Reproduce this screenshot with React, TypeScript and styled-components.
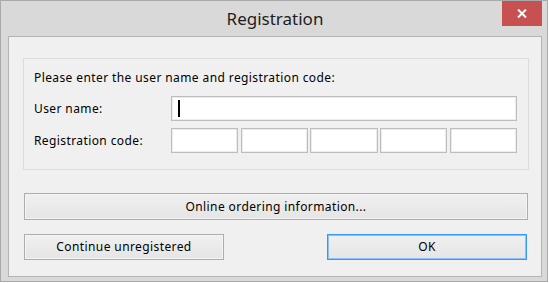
import React from 'react'
import styled, { createGlobalStyle } from 'styled-components'

const GlobalStyle = createGlobalStyle`
  html, body {
    margin: 0;
    padding: 0;
    background: #ffffff;
  }
  body {
    font-family: "Segoe UI", "Noto Sans", "Open Sans", sans-serif;
    font-size: 12px;
    letter-spacing: 0.4px;
    color: #000000;
  }
  * {
    box-sizing: border-box;
  }
`

const Window = styled.div`
  width: 548px;
  height: 282px;
  display: flex;
  flex-direction: column;
  padding: 0 5px 4px 7px;
  background: #d9d9d9;
  border: 1px solid #aaaaaa;
`

const TitleBar = styled.div`
  height: 35px;
  display: grid;
  grid-template-columns: 1fr auto 1fr;
  align-items: start;
`

const Title = styled.div`
  grid-column: 2;
  margin-top: 7px;
  font-size: 17px;
  letter-spacing: 0;
  line-height: 22px;
  color: #1e1e1e;
`

const CloseButton = styled.div`
  grid-column: 3;
  justify-self: end;
  width: 40px;
  height: 25px;
  display: flex;
  align-items: center;
  justify-content: center;
  background: #c75050;
`

const Client = styled.div`
  flex: 1;
  display: flex;
  flex-direction: column;
  padding: 21px 12px 0 14px;
  background: #f0f0f0;
  border: 1px solid #b4b4b4;
`

const GroupBox = styled.div`
  display: flex;
  flex-direction: column;
  padding: 11px 11px 16px 10px;
  border: 1px solid #dcdcdc;
`

const Prompt = styled.div`
  line-height: 16px;
  margin-bottom: 10px;
`

const FieldRow = styled.div<{ $gap?: number }>`
  display: grid;
  grid-template-columns: 137px 1fr;
  align-items: center;
  height: 25px;
  margin-bottom: ${p => p.$gap ?? 0}px;
`

const Label = styled.div`
  line-height: 16px;
`

const TextField = styled.div`
  height: 25px;
  display: flex;
  align-items: center;
  padding-left: 6px;
  background: #ffffff;
  border: 1px solid #bdbdbd;
  box-shadow: inset 0 0 0 1px #ececec;
`

const Caret = styled.span`
  width: 2px;
  height: 17px;
  background: #000000;
`

const CodeGrid = styled.div`
  display: grid;
  grid-template-columns: repeat(5, 1fr);
  gap: 2.5px;
`

const Button = styled.div<{ $primary?: boolean; $width?: number }>`
  height: ${p => (p.$width ? 26 : 27)}px;
  width: ${p => (p.$width ? `${p.$width}px` : 'auto')};
  display: flex;
  align-items: center;
  justify-content: center;
  line-height: 16px;
  background: linear-gradient(#f0f0f0, #e5e5e5);
  border: 1px solid ${p => (p.$primary ? '#3399ff' : '#adadad')};
  box-shadow: inset 0 0 0 1px ${p => (p.$primary ? '#8cc2f5' : '#f4f4f4')};
`

const WideButton = styled(Button)`
  margin: 23px 1px 14px 1px;
`

const ButtonRow = styled.div`
  display: flex;
  justify-content: space-between;
  padding: 0 2px 0 1px;
`

const CloseIcon = () => (
  <svg width="10" height="9" viewBox="0 0 10 9">
    <path d="M1 0.5 L9 8.5 M9 0.5 L1 8.5" stroke="#ffffff" strokeWidth="2" fill="none" />
  </svg>
)

export default function App() {
  return (
    <>
      <GlobalStyle />
      <Window>
        <TitleBar>
          <Title>Registration</Title>
          <CloseButton>
            <CloseIcon />
          </CloseButton>
        </TitleBar>
        <Client>
          <GroupBox>
            <Prompt>Please enter the user name and registration code:</Prompt>
            <FieldRow $gap={7}>
              <Label>User name:</Label>
              <TextField>
                <Caret />
              </TextField>
            </FieldRow>
            <FieldRow>
              <Label>Registration code:</Label>
              <CodeGrid>
                {[0, 1, 2, 3, 4].map(i => (
                  <TextField key={i} />
                ))}
              </CodeGrid>
            </FieldRow>
          </GroupBox>
          <WideButton>Online ordering information...</WideButton>
          <ButtonRow>
            <Button $width={200}>Continue unregistered</Button>
            <Button $width={200} $primary>OK</Button>
          </ButtonRow>
        </Client>
      </Window>
    </>
  )
}
